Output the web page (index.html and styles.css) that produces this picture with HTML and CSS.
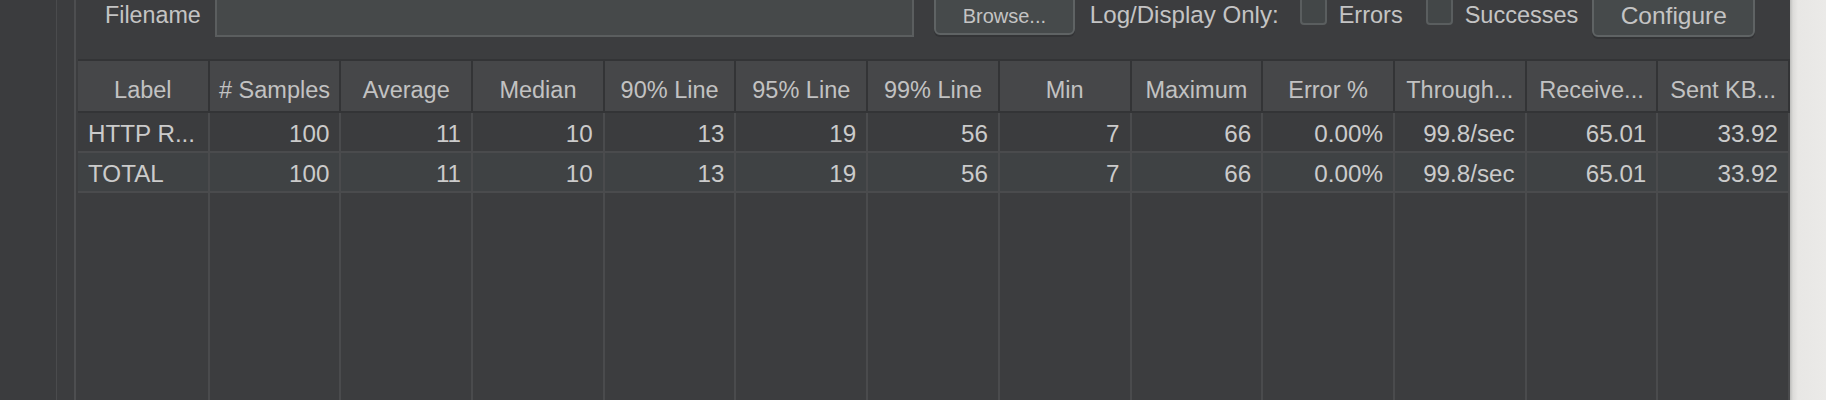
FILE: index.html
```html
<!DOCTYPE html>
<html>
<head>
<meta charset="utf-8">
<link rel="stylesheet" href="styles.css">
</head>
<body>
<div class="app">
  <div class="rail"></div>
  <div class="rail2"></div>
  <div class="main">
    <div class="toolbar">
      <span class="lbl fname">Filename</span>
      <div class="field"></div>
      <div class="btn browse">Browse...</div>
      <span class="lbl logonly">Log/Display Only:</span>
      <span class="check c1"></span><span class="lbl errors">Errors</span>
      <span class="check c2"></span><span class="lbl succ">Successes</span>
      <div class="btn configure">Configure</div>
    </div>
    <div class="table">
      <div class="row head">
        <div class="cell">Label</div>
        <div class="cell"># Samples</div>
        <div class="cell">Average</div>
        <div class="cell">Median</div>
        <div class="cell">90% Line</div>
        <div class="cell">95% Line</div>
        <div class="cell">99% Line</div>
        <div class="cell">Min</div>
        <div class="cell">Maximum</div>
        <div class="cell">Error %</div>
        <div class="cell">Through...</div>
        <div class="cell">Receive...</div>
        <div class="cell">Sent KB...</div>
      </div>
      <div class="row data r1">
        <div class="cell left">HTTP R...</div>
        <div class="cell">100</div>
        <div class="cell">11</div>
        <div class="cell">10</div>
        <div class="cell">13</div>
        <div class="cell">19</div>
        <div class="cell">56</div>
        <div class="cell">7</div>
        <div class="cell">66</div>
        <div class="cell">0.00%</div>
        <div class="cell">99.8/sec</div>
        <div class="cell">65.01</div>
        <div class="cell">33.92</div>
      </div>
      <div class="row data r2">
        <div class="cell left">TOTAL</div>
        <div class="cell">100</div>
        <div class="cell">11</div>
        <div class="cell">10</div>
        <div class="cell">13</div>
        <div class="cell">19</div>
        <div class="cell">56</div>
        <div class="cell">7</div>
        <div class="cell">66</div>
        <div class="cell">0.00%</div>
        <div class="cell">99.8/sec</div>
        <div class="cell">65.01</div>
        <div class="cell">33.92</div>
      </div>
      <div class="row filler">
        <div class="cell"></div><div class="cell"></div><div class="cell"></div>
        <div class="cell"></div><div class="cell"></div><div class="cell"></div>
        <div class="cell"></div><div class="cell"></div><div class="cell"></div>
        <div class="cell"></div><div class="cell"></div><div class="cell"></div>
        <div class="cell"></div>
      </div>
    </div>
  </div>
  <div class="edge"></div>
</div>
</body>
</html>
```
FILE: styles.css
```css
* { box-sizing: border-box; }
html, body {
  margin: 0;
  padding: 0;
  width: 1826px;
  height: 400px;
  overflow: hidden;
  background: #3c3d3f;
  font-family: "Liberation Sans", Arial, sans-serif;
}
.app {
  display: flex;
  width: 1826px;
  height: 400px;
}
.rail {
  width: 57px;
  flex: none;
  background: #3b3c3e;
  border-right: 1px solid #4a4b4d;
}
.rail2 {
  width: 19px;
  flex: none;
  background: #3c3d3f;
  border-right: 2px solid #4d4e50;
}
.main {
  width: 1714px;
  flex: none;
  display: flex;
  flex-direction: column;
  padding-left: 2px;
  background: #3c3d3f;
}
.toolbar {
  display: flex;
  align-items: center;
  height: 56px;
  margin-top: -14px;
  padding-left: 27px;
  flex: none;
}
.lbl {
  color: #c4c4c4;
  font-size: 23.5px;
  white-space: nowrap;
  padding-top: 2px;
}
.fname { font-size: 23.3px; }
.field {
  width: 699px;
  height: 46px;
  margin-left: 14px;
  background: #46494a;
  border: 2px solid #5b5e5f;
}
.btn {
  display: flex;
  align-items: center;
  justify-content: center;
  color: #c4c4c4;
  background: #464a4b;
  border: 2px solid #5f6364;
  border-radius: 6px;
  box-shadow: 0 2px 0 #333436;
  white-space: nowrap;
  padding-top: 4px;
}
.browse {
  width: 141px;
  height: 42px;
  margin-left: 20px;
  font-size: 20px;
}
.logonly { margin-left: 15px; font-size: 24.1px; }
.check {
  align-self: flex-start;
  margin-top: 11px;
  width: 27px;
  height: 28px;
  background: #434748;
  border: 2px solid #5a5e5f;
  border-radius: 4px;
  flex: none;
}
.c1 { margin-left: 21px; }
.c2 { margin-left: 23px; }
.errors, .succ { margin-left: 12px; }
.configure {
  width: 163px;
  height: 45px;
  margin-left: 14px;
  font-size: 24.5px;
}
.table {
  flex: 1;
  width: 1712px;
  margin-top: 17px;
  display: flex;
  flex-direction: column;
  border-top: 2px solid #333436;
}
.row {
  display: grid;
  grid-template-columns: repeat(13, 1fr);
  flex: none;
}
.cell {
  border-right: 2px solid #4a4b4d;
  white-space: nowrap;
  overflow: hidden;
}
.head {
  height: 52px;
  background: #464749;
  border-bottom: 2px solid #333436;
}
.head .cell {
  border-right-color: #333436;
  display: flex;
  align-items: center;
  justify-content: center;
  color: #c2c2c2;
  font-size: 23.5px;
  padding-top: 8px;
}
.data {
  height: 40px;
  border-bottom: 2px solid #4a4b4d;
}
.data .cell {
  display: flex;
  align-items: center;
  justify-content: flex-end;
  padding-right: 10px;
  padding-top: 3px;
  color: #cbcbcb;
  font-size: 24.2px;
}
.data .cell.left {
  justify-content: flex-start;
  padding-left: 10px;
  padding-right: 0;
}
.r1 { background: #3b3c3e; }
.r2 { background: #3f4244; }
.filler {
  flex: 1;
  background: #3c3d3f;
}
.edge {
  flex: 1;
  background: linear-gradient(to right, #bdbdbb 0, #dcdbd9 3px, #e8e7e5 8px, #ebeae8 100%);
}
```
